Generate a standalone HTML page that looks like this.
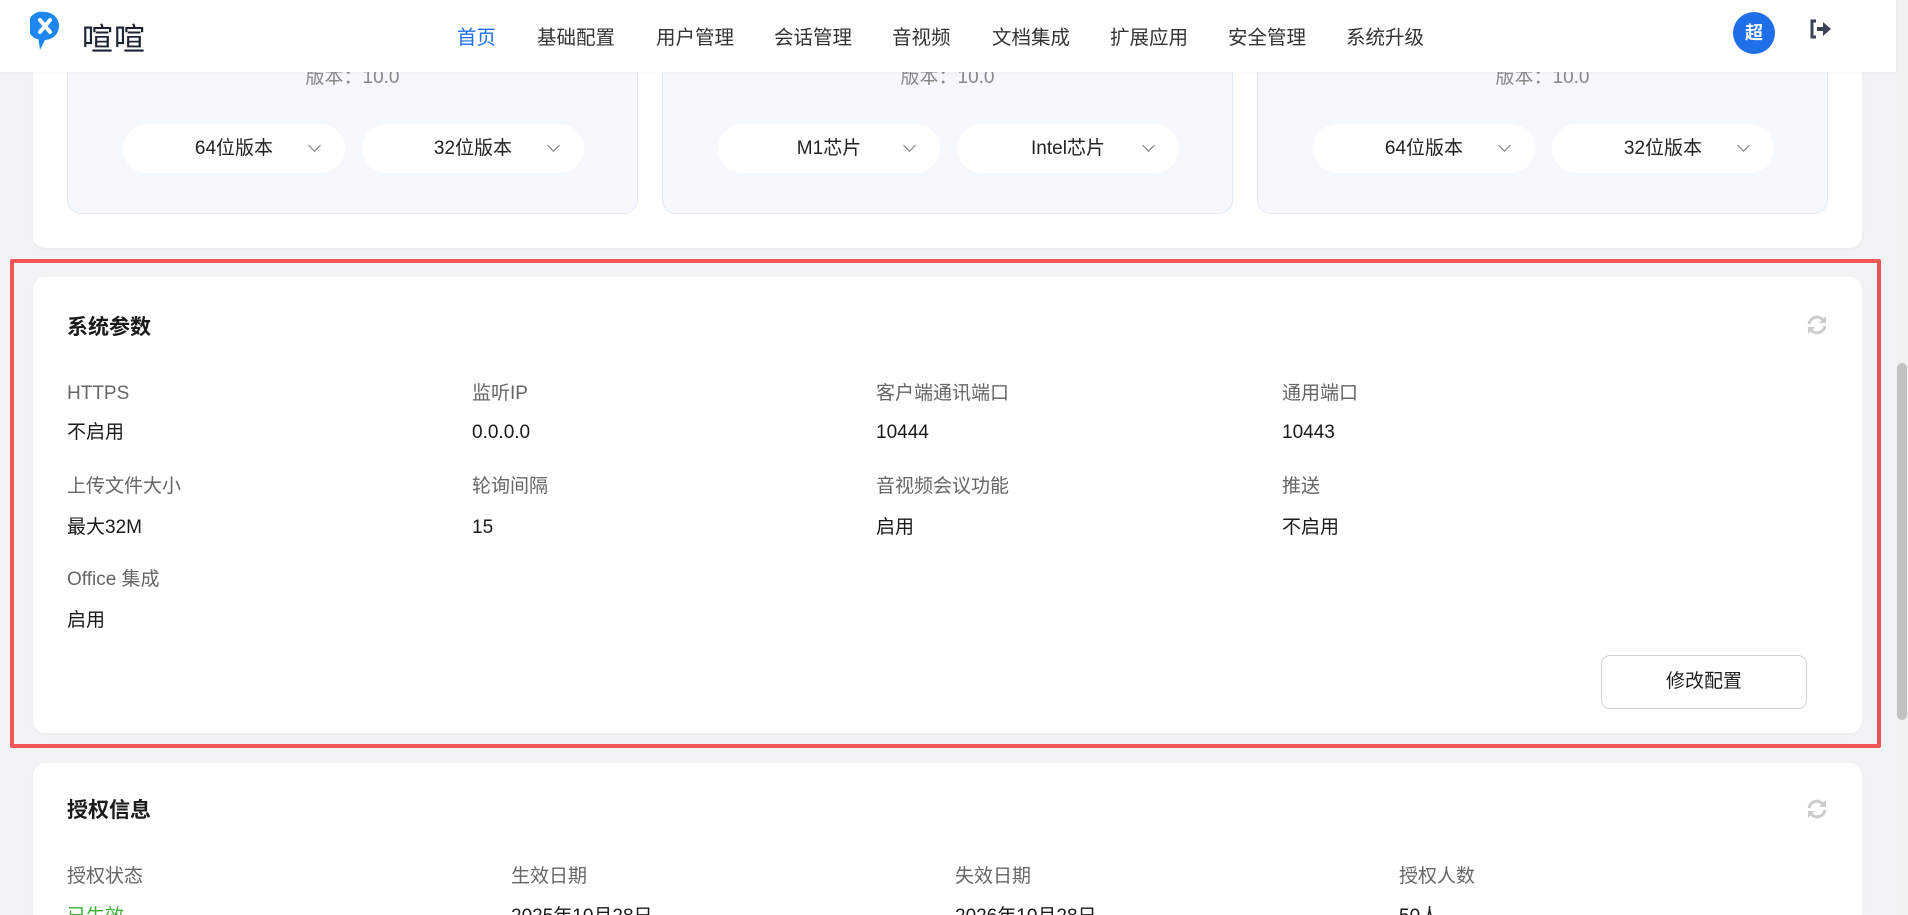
<!DOCTYPE html>
<html style="width:1908px;height:915px;overflow:hidden"><head><meta charset="utf-8"><style>
*{margin:0;padding:0;box-sizing:border-box}
body{width:1908px;height:915px;overflow:hidden;background:#f2f3f5;font-family:"Liberation Sans","Noto Sans CJK SC",sans-serif;position:relative;color:#1f1f1f}
.abs{position:absolute}
.header{left:0;top:0;width:1896px;height:72px;background:#fff;z-index:5;box-shadow:0 1px 3px rgba(0,0,0,.04)}
.nav{font-size:19.5px;color:#333;top:21px;white-space:nowrap}
.card{background:#fff;border-radius:12px;left:33px;width:1829px;box-shadow:0 1px 3px rgba(0,0,0,.05);overflow:hidden}
.dl{top:0;height:214px;background:#f5f8fc;border:1px solid #e1e9f5;border-top:none;border-radius:0 0 14px 14px;width:571px}
.ver{width:100%;text-align:center;top:62px;font-size:19px;color:#888}
.dd{top:124px;height:49px;width:222px;background:#fff;border-radius:25px;font-size:19px;color:#222;line-height:49px;text-align:center}
.dd span{position:absolute;right:26px;width:9px;height:9px;border-right:1.5px solid #777;border-bottom:1.5px solid #777;transform:rotate(45deg);top:17px}
.ttl{font-size:21px;font-weight:bold;color:#1a1a1a;line-height:26px}
.lb{font-size:19px;color:#666;line-height:24px}
.vl{font-size:19px;color:#1a1a1a;line-height:24px}
</style></head><body>
<div class="abs header">
  <svg class="abs" style="left:30px;top:11px" width="30" height="46" viewBox="0 0 30 46"><path d="M15 1a14 14 0 0 1 14 14 14 14 0 0 1-14 14l-5 10-1.5-10.5A14 14 0 0 1 15 1z" fill="#1e86f0"/><path d="M10 9l10 12M20 9L10 21" stroke="#fff" stroke-width="4" stroke-linecap="round"/></svg>
  <div class="abs" style="left:82px;top:14px;font-size:31px;color:#1c2433;letter-spacing:1px">喧喧</div>
  <div class="abs nav" style="left:457px;color:#1d6ff0">首页</div>
  <div class="abs nav" style="left:537px">基础配置</div>
  <div class="abs nav" style="left:656px">用户管理</div>
  <div class="abs nav" style="left:774px">会话管理</div>
  <div class="abs nav" style="left:892px">音视频</div>
  <div class="abs nav" style="left:992px">文档集成</div>
  <div class="abs nav" style="left:1110px">扩展应用</div>
  <div class="abs nav" style="left:1228px">安全管理</div>
  <div class="abs nav" style="left:1346px">系统升级</div>
  <div class="abs" style="left:1733px;top:12px;width:42px;height:42px;border-radius:50%;background:#1e6fe8;color:#fff;font-size:18px;font-weight:bold;text-align:center;line-height:42px">超</div>
  <svg class="abs" style="left:1808px;top:18px" width="24" height="22" viewBox="0 0 24 22"><path d="M8 3H4v16h4" fill="none" stroke="#3b4257" stroke-width="3"/><path d="M9 9h6V4l8 7-8 7v-5H9z" fill="#3b4257"/></svg>
</div>
<div class="abs card" style="top:0;height:248px">
  <div class="abs dl" style="left:34px"><div class="abs ver">版本：10.0</div>
    <div class="abs dd" style="left:55px">64位版本<span></span></div><div class="abs dd" style="left:294px">32位版本<span></span></div></div>
  <div class="abs dl" style="left:629px"><div class="abs ver">版本：10.0</div>
    <div class="abs dd" style="left:55px">M1芯片<span></span></div><div class="abs dd" style="left:294px">Intel芯片<span></span></div></div>
  <div class="abs dl" style="left:1224px"><div class="abs ver">版本：10.0</div>
    <div class="abs dd" style="left:55px">64位版本<span></span></div><div class="abs dd" style="left:294px">32位版本<span></span></div></div>
</div>
<div class="abs" style="left:10px;top:259px;width:1871px;height:489px;border:4px solid #f25555;border-radius:2px;z-index:3"></div>
<div class="abs card" style="top:277px;height:456px">
  <div class="abs ttl" style="left:34px;top:38px">系统参数</div>
  <svg class="abs" style="left:1773px;top:38px" width="22" height="20" viewBox="0 0 22 20"><path d="M3 9a8 8 0 0 1 14-4" fill="none" stroke="#ccc" stroke-width="3"/><path d="M20 1v7h-7z" fill="#ccc"/><path d="M19 11a8 8 0 0 1-14 4" fill="none" stroke="#ccc" stroke-width="3"/><path d="M2 19v-7h7z" fill="#ccc"/></svg>
  <div class="abs lb" style="left:34px;top:105px">HTTPS</div><div class="abs vl" style="left:34px;top:144px">不启用</div>
  <div class="abs lb" style="left:439px;top:105px">监听IP</div><div class="abs vl" style="left:439px;top:144px">0.0.0.0</div>
  <div class="abs lb" style="left:843px;top:105px">客户端通讯端口</div><div class="abs vl" style="left:843px;top:144px">10444</div>
  <div class="abs lb" style="left:1249px;top:105px">通用端口</div><div class="abs vl" style="left:1249px;top:144px">10443</div>
  <div class="abs lb" style="left:34px;top:198px">上传文件大小</div><div class="abs vl" style="left:34px;top:239px">最大32M</div>
  <div class="abs lb" style="left:439px;top:198px">轮询间隔</div><div class="abs vl" style="left:439px;top:239px">15</div>
  <div class="abs lb" style="left:843px;top:198px">音视频会议功能</div><div class="abs vl" style="left:843px;top:239px">启用</div>
  <div class="abs lb" style="left:1249px;top:198px">推送</div><div class="abs vl" style="left:1249px;top:239px">不启用</div>
  <div class="abs lb" style="left:34px;top:291px">Office 集成</div><div class="abs vl" style="left:34px;top:332px">启用</div>
  <div class="abs" style="left:1568px;top:378px;width:206px;height:54px;border:1px solid #d4d4d8;border-radius:9px;text-align:center;line-height:52px;font-size:19px;color:#222">修改配置</div>
</div>
<div class="abs card" style="top:763px;height:152px;border-radius:12px 12px 0 0">
  <div class="abs ttl" style="left:34px;top:35px">授权信息</div>
  <svg class="abs" style="left:1773px;top:36px" width="22" height="20" viewBox="0 0 22 20"><path d="M3 9a8 8 0 0 1 14-4" fill="none" stroke="#ccc" stroke-width="3"/><path d="M20 1v7h-7z" fill="#ccc"/><path d="M19 11a8 8 0 0 1-14 4" fill="none" stroke="#ccc" stroke-width="3"/><path d="M2 19v-7h7z" fill="#ccc"/></svg>
  <div class="abs lb" style="left:34px;top:102px">授权状态</div><div class="abs vl" style="left:34px;top:142px;color:#3cb034">已生效</div>
  <div class="abs lb" style="left:478px;top:102px">生效日期</div><div class="abs vl" style="left:478px;top:142px">2025年10月28日</div>
  <div class="abs lb" style="left:922px;top:102px">失效日期</div><div class="abs vl" style="left:922px;top:142px">2026年10月28日</div>
  <div class="abs lb" style="left:1366px;top:102px">授权人数</div><div class="abs vl" style="left:1366px;top:142px">50人</div>
</div>
<div class="abs" style="left:1896px;top:0;width:12px;height:915px;background:#f1f1f1"></div>
<div class="abs" style="left:1897px;top:363px;width:10px;height:357px;background:#c1c1c1;border-radius:5px"></div>
</body></html>
